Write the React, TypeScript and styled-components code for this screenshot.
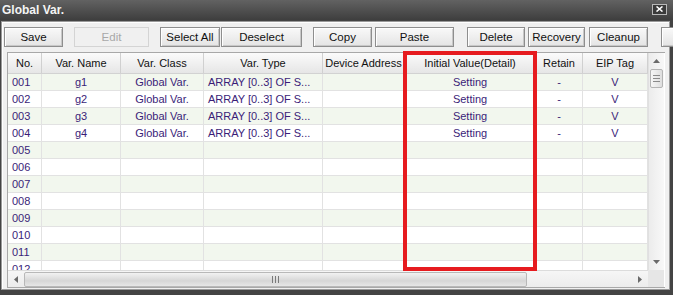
import React from 'react';
import styled, { createGlobalStyle } from 'styled-components';

const GlobalStyle = createGlobalStyle`
    body {
        margin: 0;
        background: #3d3d3d;
        font-family: 'Liberation Sans', Arial, sans-serif;
    }
`;

const Window = styled.div`
    width: 673px;
    height: 295px;
    display: flex;
    flex-direction: column;
    background: #444444;
    overflow: hidden;
`;

const TitleBar = styled.div`
    height: 20px;
    flex: none;
    display: flex;
    align-items: center;
    justify-content: space-between;
    padding: 0 6px 0 2px;
    background: linear-gradient(#626262, #3e3e3e);
`;

const Title = styled.span`
    color: #f4f4f4;
    font-weight: bold;
    font-size: 12px;
`;

const CloseButton = styled.div`
    width: 13px;
    height: 9px;
    margin-top: -2px;
    border: 1px solid #b8b8b8;
    background: #3a3a3a;
    display: flex;
    align-items: center;
    justify-content: center;
`;

const Panel = styled.div`
    flex: 1;
    margin: 1px 3px 5px 1px;
    background: #f0f0f0;
    border: 1px solid #9a9a9a;
    box-shadow: inset 1px 1px 0 #ffffff;
    display: flex;
    flex-direction: column;
    padding: 5px 0 0 2px;
    min-height: 0;
`;

const Toolbar = styled.div`
    display: flex;
    height: 20px;
    flex: none;
`;

const ToolButton = styled.div<{ $w: number; $gap: number; $disabled?: boolean }>`
    flex: none;
    width: ${(p) => p.$w}px;
    height: 20px;
    margin-left: ${(p) => p.$gap}px;
    box-sizing: border-box;
    display: flex;
    align-items: center;
    justify-content: center;
    font-size: 11.5px;
    color: ${(p) => (p.$disabled ? '#a8a8a8' : '#111111')};
    border: 1px solid ${(p) => (p.$disabled ? '#d4d4d4' : '#8e8e8e')};
    background: ${(p) => (p.$disabled ? '#f0f0f0' : 'linear-gradient(#f9f9f9, #e4e4e4)')};
    box-shadow: ${(p) => (p.$disabled ? 'none' : 'inset 1px 1px 0 #ffffff, inset -1px -1px 0 #c8c8c8')};
`;

const GridFrame = styled.div`
    position: relative;
    margin: 5px 0 0 3px;
    width: 657px;
    height: 234px;
    border: 1px solid #a8a8a8;
    border-right: none;
    display: grid;
    grid-template-columns: 640px 16px;
    grid-template-rows: 217px 17px;
    background: #ffffff;
`;

const Sheet = styled.div`
    overflow: hidden;
    display: flex;
    flex-direction: column;
`;

const COLS = '34px 79px 83px 119px 82px 131px 47px 65px';

const HeaderRow = styled.div`
    display: grid;
    grid-template-columns: ${COLS};
    height: 21px;
    flex: none;
    box-sizing: border-box;
    background: linear-gradient(#fbfbfb, #e6e6e6);
    border-bottom: 1px solid #d2d2d2;
`;

const HeaderCell = styled.div`
    display: flex;
    align-items: center;
    justify-content: center;
    font-size: 11px;
    color: #111111;
    border-right: 1px solid #d0d0d0;
    white-space: nowrap;
    overflow: hidden;
`;

const Row = styled.div<{ $odd: boolean }>`
    display: grid;
    grid-template-columns: ${COLS};
    height: 17px;
    flex: none;
    box-sizing: border-box;
    border-bottom: 1px solid #e2e2e2;
    background: ${(p) => (p.$odd ? '#f2f7ee' : '#ffffff')};
`;

const Cell = styled.div<{ $align?: 'left' | 'center' }>`
    display: flex;
    align-items: center;
    justify-content: ${(p) => (p.$align === 'left' ? 'flex-start' : 'center')};
    padding-left: ${(p) => (p.$align === 'left' ? '4px' : '0')};
    font-size: 11px;
    color: #3a1d78;
    border-right: 1px solid #e2e2e2;
    white-space: nowrap;
    overflow: hidden;
`;

const VScroll = styled.div`
    background: linear-gradient(90deg, #ececec, #f8f8f8);
    display: flex;
    flex-direction: column;
    align-items: center;
    border-left: 1px solid #e0e0e0;
`;

const ArrowBox = styled.div`
    width: 16px;
    height: 16px;
    flex: none;
    display: flex;
    align-items: center;
    justify-content: center;
`;

const VThumb = styled.div`
    width: 13px;
    height: 19px;
    flex: none;
    box-sizing: border-box;
    border: 1px solid #b4b4b4;
    border-radius: 2px;
    background: linear-gradient(90deg, #f6f6f6, #dedede);
    display: flex;
    flex-direction: column;
    align-items: center;
    justify-content: center;
    gap: 2px;
`;

const GripLine = styled.div`
    width: 7px;
    height: 1px;
    background: #8a8a8a;
`;

const Spacer = styled.div`
    flex: 1;
`;

const HScroll = styled.div`
    display: flex;
    align-items: center;
    background: linear-gradient(#f6f6f6, #ececec);
    border-top: 1px solid #dcdcdc;
`;

const HThumb = styled.div`
    width: 503px;
    height: 15px;
    flex: none;
    box-sizing: border-box;
    border: 1px solid #b8b8b8;
    border-radius: 2px;
    background: linear-gradient(#f2f2f2, #d6d6d6 60%, #e6e6e6);
    display: flex;
    align-items: center;
    justify-content: center;
    gap: 2px;
`;

const HGrip = styled.div`
    width: 1px;
    height: 7px;
    background: #7a7a7a;
`;

const Corner = styled.div`
    background: #e6e6e6;
`;

const Highlight = styled.div`
    position: absolute;
    left: 395px;
    top: -2px;
    width: 134px;
    height: 220px;
    box-sizing: border-box;
    border: 4px solid #e61b1f;
    pointer-events: none;
`;

const Tri = ({ dir }: { dir: 'up' | 'down' | 'left' | 'right' }) => {
    const pts = {
        up: '1,6 4.5,2 8,6',
        down: '1,2 4.5,6 8,2',
        left: '6,1 2,4.5 6,8',
        right: '2,1 6,4.5 2,8',
    }[dir];
    return (
        <svg width="9" height="9" viewBox="0 0 9 9">
            <polygon points={pts} fill="#6a6a6a" />
        </svg>
    );
};

const buttons = [
    { label: 'Save', w: 59, gap: 0 },
    { label: 'Edit', w: 75, gap: 11, disabled: true },
    { label: 'Select All', w: 60, gap: 11 },
    { label: 'Deselect', w: 81, gap: 1 },
    { label: 'Copy', w: 59, gap: 11 },
    { label: 'Paste', w: 79, gap: 3 },
    { label: 'Delete', w: 58, gap: 13 },
    { label: 'Recovery', w: 57, gap: 3 },
    { label: 'Cleanup', w: 59, gap: 4 },
    { label: '', w: 30, gap: 13 },
];

const headers = [
    'No.',
    'Var. Name',
    'Var. Class',
    'Var. Type',
    'Device Address',
    'Initial Value(Detail)',
    'Retain',
    'EIP Tag',
];

const vars = ['g1', 'g2', 'g3', 'g4'];

export default function App() {
    const rows = Array.from({ length: 12 }, (_, i) => i + 1);
    return (
        <>
            <GlobalStyle />
            <Window>
                <TitleBar>
                    <Title>Global Var.</Title>
                    <CloseButton>
                        <svg width="7" height="6" viewBox="0 0 7 6">
                            <path d="M0.5 0.5 L6.5 5.5 M6.5 0.5 L0.5 5.5" stroke="#ffffff" strokeWidth="1.6" />
                        </svg>
                    </CloseButton>
                </TitleBar>
                <Panel>
                    <Toolbar>
                        {buttons.map((b, i) => (
                            <ToolButton key={i} $w={b.w} $gap={b.gap} $disabled={b.disabled}>
                                {b.label}
                            </ToolButton>
                        ))}
                    </Toolbar>
                    <GridFrame>
                        <Sheet>
                            <HeaderRow>
                                {headers.map((h) => (
                                    <HeaderCell key={h}>{h}</HeaderCell>
                                ))}
                            </HeaderRow>
                            {rows.map((n) => {
                                const v = vars[n - 1];
                                return (
                                    <Row key={n} $odd={n % 2 === 1}>
                                        <Cell $align="left">{String(n).padStart(3, '0')}</Cell>
                                        <Cell>{v ?? ''}</Cell>
                                        <Cell>{v ? 'Global Var.' : ''}</Cell>
                                        <Cell $align="left">{v ? 'ARRAY [0..3] OF S...' : ''}</Cell>
                                        <Cell />
                                        <Cell>{v ? 'Setting' : ''}</Cell>
                                        <Cell>{v ? '-' : ''}</Cell>
                                        <Cell>{v ? 'V' : ''}</Cell>
                                    </Row>
                                );
                            })}
                        </Sheet>
                        <VScroll>
                            <ArrowBox>
                                <Tri dir="up" />
                            </ArrowBox>
                            <VThumb>
                                <GripLine />
                                <GripLine />
                                <GripLine />
                            </VThumb>
                            <Spacer />
                            <ArrowBox>
                                <Tri dir="down" />
                            </ArrowBox>
                        </VScroll>
                        <HScroll>
                            <ArrowBox>
                                <Tri dir="left" />
                            </ArrowBox>
                            <HThumb>
                                <HGrip />
                                <HGrip />
                                <HGrip />
                            </HThumb>
                            <Spacer />
                            <ArrowBox>
                                <Tri dir="right" />
                            </ArrowBox>
                        </HScroll>
                        <Corner />
                        <Highlight />
                    </GridFrame>
                </Panel>
            </Window>
        </>
    );
}
